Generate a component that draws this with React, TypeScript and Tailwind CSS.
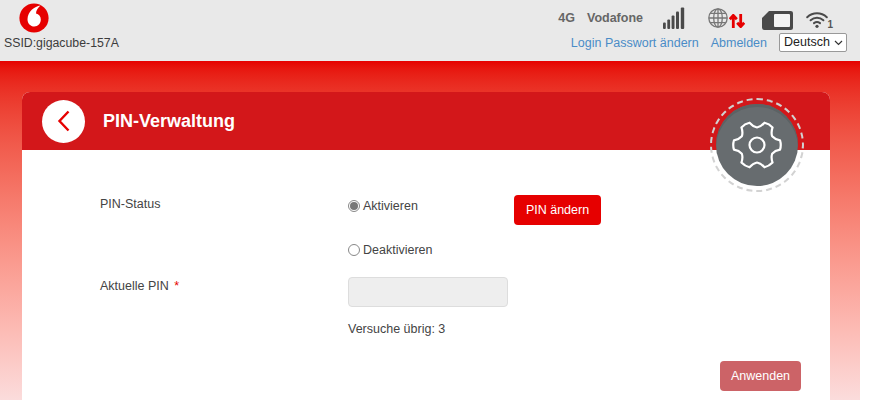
import React from "react";

function VodafoneLogo() {
  return (
    <svg className="block" width="30" height="30" viewBox="0 0 30 30">
      <circle cx="15" cy="15" r="14.600" fill="#e60000" />
      <path d="M21.500 2.500C15.500 3.500 8.500 8.500 8.500 16.200C8.500 20.500 11.500 23.500 15.300 23.500C19 23.500 21.800 20.300 21.800 16.500C21.800 13.200 19.800 11.200 17 10.500C17 7.500 19 4.500 21.500 2.500Z" fill="#fff" />
    </svg>
  );
}

function Signal() {
  return (
    <svg className="block" width="22" height="22" viewBox="0 0 22 22" fill="#4a4a4a">
      <rect x="0" y="15.500" width="2.800" height="6.500" rx="1" />
      <rect x="4.300" y="12.500" width="2.800" height="9.500" rx="1" />
      <rect x="8.600" y="8.500" width="2.900" height="13.500" rx="1" />
      <rect x="13" y="4.500" width="3" height="17.500" rx="1" />
      <rect x="17.800" y="0.500" width="3.400" height="21.500" rx="1" />
    </svg>
  );
}

function Globe() {
  return (
    <svg className="block" width="20" height="20" viewBox="0 0 20 20" fill="none" stroke="#777" strokeWidth="1.300">
      <circle cx="10" cy="10" r="9.200" />
      <ellipse cx="10" cy="10" rx="4.300" ry="9.200" />
      <path d="M10 1v18M1 10h18M2.200 5.300h15.600M2.200 14.700h15.600" />
    </svg>
  );
}

function Arrows() {
  return (
    <svg className="block" width="16" height="14" viewBox="0 0 16 14" fill="none" stroke="#e60000" strokeWidth="2.800">
      <path d="M4.300 14V2M0.800 5.200l3.500-3.800 3.500 3.800" />
      <path d="M11.700 0v12M8.200 8.800l3.500 3.800 3.500-3.800" />
    </svg>
  );
}

function Sim() {
  return (
    <svg className="block" width="31" height="19" viewBox="0 0 31 19">
      <path d="M7 0H28.500a2.500 2.500 0 0 1 2.500 2.500v14a2.500 2.500 0 0 1-2.500 2.500H2.500a2.500 2.500 0 0 1-2.500-2.500V7z" fill="#4a4a4a" />
      <rect x="12" y="3" width="16" height="13" rx="1" fill="#f4f4f4" />
    </svg>
  );
}

function Wifi() {
  return (
    <svg className="block" width="22" height="16" viewBox="0 0 22 16" fill="none" stroke="#4a4a4a" strokeWidth="2" strokeLinecap="round">
      <path d="M1.200 5.200C6.800 0 15.200 0 20.800 5.200" />
      <path d="M4.600 8.300C8.400 5 13.600 5 17.400 8.300" />
      <path d="M8 11.100c1.800-1.200 4.200-1.200 6 0" />
      <circle cx="11" cy="14.300" r="1.600" fill="#4a4a4a" stroke="none" />
    </svg>
  );
}

function Gear() {
  const teeth = 6;
  const outer = 23.500;
  const inner = 17.500;
  const step = (Math.PI * 2) / teeth;
  const p = (r: number, ang: number) => `${(25 + r * Math.cos(ang)).toFixed(2)} ${(25 + r * Math.sin(ang)).toFixed(2)}`;
  const parts: string[] = [];
  for (let i = 0; i < teeth; i++) {
    const a = i * step;
    parts.push(
      `${i === 0 ? "M" : "L"}${p(outer, a - 0.2)} Q${p(outer + 1, a)} ${p(outer, a + 0.2)} C${p(outer - 3, a + 0.26)} ${p(inner + 1, a + 0.34)} ${p(inner, a + step / 2)} C${p(inner + 1, a + step - 0.34)} ${p(outer - 3, a + step - 0.26)} ${p(outer, a + step - 0.2)}`
    );
  }
  return (
    <svg className="block" width="50" height="50" viewBox="0 0 50 50" fill="none" stroke="#fff" strokeWidth="2.200" strokeLinejoin="round">
      <path d={parts.join(" ") + "Z"} />
      <circle cx="25" cy="25" r="7.500" />
    </svg>
  );
}

export default function App() {
  return (
    <div className="h-[400px] w-[879px] overflow-hidden bg-white font-['Liberation_Sans',Arial,sans-serif]">
      <div className="flex h-full w-[860px] flex-col">
        <header className="flex h-[61px] shrink-0 justify-between bg-[#e9e9e9]">
          <div className="flex flex-col pl-1 pt-[3px]">
            <div className="pl-[15px]">
              <VodafoneLogo />
            </div>
            <span className="mt-[3px] text-[12.300px] leading-[14px] text-[#3c3c3c]">SSID:gigacube-157A</span>
          </div>
          <div className="flex flex-col items-end pr-[13px] pt-[6px]">
            <div className="flex h-[24px] items-center pr-[19px]">
              <span className="text-[12.500px] font-bold text-[#666]">4G</span>
              <span className="ml-[12px] text-[12.500px] font-bold text-[#666]">Vodafone</span>
              <span className="ml-[20px]"><Signal /></span>
              <span className="ml-[23px]"><Globe /></span>
              <span className="ml-[1px] mt-[6px]"><Arrows /></span>
              <span className="ml-[17px] mt-[5px]"><Sim /></span>
              <span className="relative ml-[13px] mt-[4px]">
                <Wifi />
                <span className="absolute -right-[5px] bottom-[-2px] text-[10px] font-bold leading-[10px] text-[#555]">1</span>
              </span>
            </div>
            <div className="mt-[3px] flex h-[19px] items-center">
              <a className="mt-[1px] text-[12.500px] text-[#4a8cc7]">Login Passwort ändern</a>
              <a className="ml-[12px] mt-[1px] text-[12.500px] text-[#4a8cc7]">Abmelden</a>
              <div className="ml-[12px] flex h-[19px] w-[68px] items-center justify-between rounded-[2px] border border-[#999] bg-white pl-1 pr-[3px] text-[12.500px] text-[#222]">
                <span>Deutsch</span>
                <svg width="9" height="6" viewBox="0 0 9 6" fill="none" stroke="#333" strokeWidth="1.200"><path d="M1 1l3.500 3.500L8 1" /></svg>
              </div>
            </div>
          </div>
        </header>
        <main className="min-h-0 flex-1 overflow-hidden bg-gradient-to-b from-[#e60000] to-[#fbdcdc] pl-[22px] pr-[30px] pt-[31px]">
          <section className="relative h-[400px] rounded-t-[8px] bg-white">
            <div className="flex h-[58px] items-center rounded-t-[8px] bg-[#d3171a] pl-[20px]">
              <div className="flex h-[43px] w-[43px] items-center justify-center rounded-full bg-white">
                <svg width="14" height="22" viewBox="0 0 14 22" fill="none" stroke="#e60000" strokeWidth="2.400"><path d="M11.500 1.500L2.500 11l9 9.500" /></svg>
              </div>
              <h1 className="ml-[18px] text-[18px] font-bold text-white">PIN-Verwaltung</h1>
            </div>
            <div className="absolute right-[26px] top-[6px] flex h-[94px] w-[94px] items-center justify-center rounded-full border-2 border-dashed border-[#d2d2d2]">
              <div className="flex h-[82px] w-[82px] items-center justify-center rounded-full bg-[#676c6f] shadow-[inset_0_3px_0_#5c6264]">
                <Gear />
              </div>
            </div>
            <div className="grid grid-cols-[248px_166px_1fr] pl-[78px] pt-[45px] text-[12.500px] leading-[18px] text-[#444]">
              <div>PIN-Status</div>
              <div className="flex flex-col">
                <label className="mt-[2px] flex items-center gap-[3px]">
                  <span className="flex h-[12px] w-[12px] items-center justify-center rounded-full border border-[#888] bg-white">
                    <span className="h-[8px] w-[8px] rounded-full bg-[#777]" />
                  </span>
                  Aktivieren
                </label>
                <label className="mt-[26px] flex items-center gap-[3px]">
                  <span className="h-[12px] w-[12px] rounded-full border border-[#888] bg-white" />
                  Deaktivieren
                </label>
              </div>
              <div>
                <button className="h-[30px] w-[87px] rounded-[4px] bg-[#e60000] text-[12.500px] text-white">PIN ändern</button>
              </div>
              <div className="mt-[18px]">
                Aktuelle PIN <span className="ml-[2px] text-[#e60000]">*</span>
              </div>
              <div className="col-span-2 mt-[18px]">
                <div className="h-[30px] w-[160px] rounded-[4px] border border-[#ddd] bg-[#eeeeee]" />
                <div className="mt-[13px]">Versuche übrig: 3</div>
              </div>
            </div>
            <div className="flex justify-end pr-[29px] pt-[23px]">
              <button className="h-[30px] w-[81px] rounded-[4px] bg-[#cc6367] text-[12.500px] text-white">Anwenden</button>
            </div>
          </section>
        </main>
      </div>
    </div>
  );
}
